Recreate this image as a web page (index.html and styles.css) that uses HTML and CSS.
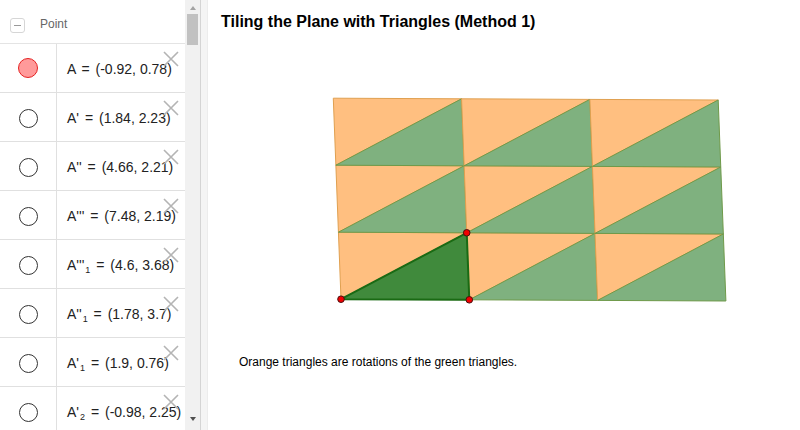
FILE: index.html
```html
<!DOCTYPE html>
<html lang="en">
<head>
    <meta charset="UTF-8">
    <title>Tiling the Plane with Triangles (Method 1)</title>
    <link rel="stylesheet" href="styles.css">
</head>
<body>
    <div class="algebra">
        <div class="list">
            <div class="list-header">
                <span class="collapse"><span class="minus"></span></span>
                <span class="group-name">Point</span>
            </div>

            <div class="item">
                <div class="marble"><span class="dot dot-on"></span></div>
                <div class="value">A <span class="eq">=</span> (-0.92, 0.78)</div>
                <svg class="delete" viewBox="0 0 16 16"><path d="M1 1 L15 15 M15 1 L1 15"/></svg>
            </div>
            <div class="item">
                <div class="marble"><span class="dot"></span></div>
                <div class="value">A' <span class="eq">=</span> (1.84, 2.23)</div>
                <svg class="delete" viewBox="0 0 16 16"><path d="M1 1 L15 15 M15 1 L1 15"/></svg>
            </div>
            <div class="item">
                <div class="marble"><span class="dot"></span></div>
                <div class="value">A'' <span class="eq">=</span> (4.66, 2.21)</div>
                <svg class="delete" viewBox="0 0 16 16"><path d="M1 1 L15 15 M15 1 L1 15"/></svg>
            </div>
            <div class="item">
                <div class="marble"><span class="dot"></span></div>
                <div class="value">A''' <span class="eq">=</span> (7.48, 2.19)</div>
                <svg class="delete" viewBox="0 0 16 16"><path d="M1 1 L15 15 M15 1 L1 15"/></svg>
            </div>
            <div class="item">
                <div class="marble"><span class="dot"></span></div>
                <div class="value">A'''<sub>1</sub> <span class="eq">=</span> (4.6, 3.68)</div>
                <svg class="delete" viewBox="0 0 16 16"><path d="M1 1 L15 15 M15 1 L1 15"/></svg>
            </div>
            <div class="item">
                <div class="marble"><span class="dot"></span></div>
                <div class="value">A''<sub>1</sub> <span class="eq">=</span> (1.78, 3.7)</div>
                <svg class="delete" viewBox="0 0 16 16"><path d="M1 1 L15 15 M15 1 L1 15"/></svg>
            </div>
            <div class="item">
                <div class="marble"><span class="dot"></span></div>
                <div class="value">A'<sub>1</sub> <span class="eq">=</span> (1.9, 0.76)</div>
                <svg class="delete" viewBox="0 0 16 16"><path d="M1 1 L15 15 M15 1 L1 15"/></svg>
            </div>
            <div class="item">
                <div class="marble"><span class="dot"></span></div>
                <div class="value">A'<sub>2</sub> <span class="eq">=</span> (-0.98, 2.25)</div>
                <svg class="delete" viewBox="0 0 16 16"><path d="M1 1 L15 15 M15 1 L1 15"/></svg>
            </div>
        </div>

        <div class="scrollbar">
            <span class="arrow-up"></span>
            <span class="thumb"></span>
            <span class="track"></span>
            <span class="arrow-down"></span>
        </div>
    </div>

    <div class="splitter"></div>

    <div class="graphics">
        <h1 class="title">Tiling the Plane with Triangles (Method 1)</h1>

        <svg class="plane" width="592" height="300" viewBox="208 45 592 300">
            <!-- bottom row -->
            <polygon class="orange" points="341,299.2 338.43,232.2 466.73,232.8"/>
            <polygon class="green" points="341,299.2 466.73,232.8 469.3,299.8"/>
            <polygon class="orange" points="469.3,299.8 466.73,232.8 595.03,233.4"/>
            <polygon class="green" points="469.3,299.8 595.03,233.4 597.6,300.4"/>
            <polygon class="orange" points="597.6,300.4 595.03,233.4 723.33,234"/>
            <polygon class="green" points="597.6,300.4 723.33,234 725.9,301"/>
            <!-- middle row -->
            <polygon class="orange" points="338.43,232.2 335.86,165.2 464.16,165.8"/>
            <polygon class="green" points="338.43,232.2 464.16,165.8 466.73,232.8"/>
            <polygon class="orange" points="466.73,232.8 464.16,165.8 592.46,166.4"/>
            <polygon class="green" points="466.73,232.8 592.46,166.4 595.03,233.4"/>
            <polygon class="orange" points="595.03,233.4 592.46,166.4 720.76,167"/>
            <polygon class="green" points="595.03,233.4 720.76,167 723.33,234"/>
            <!-- top row -->
            <polygon class="orange" points="335.86,165.2 333.29,98.2 461.59,98.8"/>
            <polygon class="green" points="335.86,165.2 461.59,98.8 464.16,165.8"/>
            <polygon class="orange" points="464.16,165.8 461.59,98.8 589.89,99.4"/>
            <polygon class="green" points="464.16,165.8 589.89,99.4 592.46,166.4"/>
            <polygon class="orange" points="592.46,166.4 589.89,99.4 718.19,100"/>
            <polygon class="green" points="592.46,166.4 718.19,100 720.76,167"/>
            <!-- the original triangle -->
            <polygon class="base" points="341,299.2 466.73,232.8 469.3,299.8"/>
            <circle class="point" cx="341" cy="299.2" r="3.3"/>
            <circle class="point" cx="469.3" cy="299.8" r="3.3"/>
            <circle class="point" cx="466.73" cy="232.8" r="3.3"/>
        </svg>

        <p class="caption">Orange triangles are rotations of the green triangles.</p>
    </div>
</body>
</html>
```

FILE: styles.css
```css
body {
    margin: 0;
    font-family: "Liberation Sans", Arial, sans-serif;
    display: flex;
    height: 430px;
    overflow: hidden;
    background: #fff;
    color: #000;
}

.algebra {
    width: 200px;
    display: flex;
    flex-shrink: 0;
}

.list {
    width: 185px;
    overflow: hidden;
}

.list-header {
    height: 43px;
    border-bottom: 1px solid #e4e4e4;
    display: flex;
    align-items: center;
    padding-left: 10px;
}

.collapse {
    width: 13px;
    height: 13px;
    border: 1px solid #d6d6d6;
    border-radius: 3px;
    display: flex;
    align-items: center;
    justify-content: center;
    margin-top: 7px;
}

.minus {
    width: 7px;
    height: 1px;
    background: #9a9a9a;
}

.group-name {
    font-size: 12px;
    color: #666;
    margin-left: 15px;
    margin-top: 4px;
}

.item {
    position: relative;
    height: 48px;
    border-bottom: 1px solid #e0e0e0;
    display: flex;
}

.marble {
    width: 56px;
    border-right: 1px solid #e0e0e0;
    display: flex;
    align-items: center;
    justify-content: center;
}

.dot {
    width: 17px;
    height: 17px;
    border: 1.5px solid #333;
    border-radius: 50%;
    background: #fff;
    margin-top: 2px;
}

.dot-on {
    background: #ff9a9a;
    border-color: #e52222;
    border-width: 1px;
    width: 18px;
    height: 18px;
    margin-top: 0;
}

.value {
    font-size: 14px;
    line-height: 50px;
    color: #222;
    padding-left: 10px;
    white-space: nowrap;
}

.eq {
    margin: 0 2px;
}

.value sub {
    font-size: 9px;
    margin-left: 1px;
    line-height: 0;
    vertical-align: -3px;
}

.delete {
    position: absolute;
    left: 163px;
    top: 7px;
    width: 16px;
    height: 16px;
    fill: none;
    stroke: #b4b4b4;
    stroke-width: 1.6;
}

.scrollbar {
    width: 15px;
    background: #f1f1f1;
    display: flex;
    flex-direction: column;
    align-items: center;
}

.arrow-up {
    margin-top: 6px;
    width: 0;
    height: 0;
    border-left: 3.5px solid transparent;
    border-right: 3.5px solid transparent;
    border-bottom: 4px solid #a3a3a3;
}

.thumb {
    margin-top: 4px;
    width: 11px;
    height: 31px;
    background: #c1c1c1;
}

.track {
    flex: 1;
}

.arrow-down {
    margin-bottom: 9px;
    width: 0;
    height: 0;
    border-left: 3.5px solid transparent;
    border-right: 3.5px solid transparent;
    border-top: 4px solid #505050;
}

.splitter {
    width: 6px;
    flex-shrink: 0;
    background: #f4f4f4;
    border-left: 1px solid #d4d4d4;
    border-right: 1px solid #ececec;
}

.graphics {
    flex: 1;
    display: flex;
    flex-direction: column;
}

.title {
    margin: 0;
    padding: 12px 0 0 13px;
    height: 20px;
    line-height: 20px;
    margin-bottom: 13px;
    font-size: 16px;
    font-weight: bold;
    white-space: nowrap;
}

.plane {
    display: block;
}

.orange {
    fill: #ffbf80;
    stroke: #e0a050;
    stroke-width: 1;
}

.green {
    fill: #7fb17f;
    stroke: #6f9a4a;
    stroke-width: 1;
}

.base {
    fill: #408a3c;
    stroke: #1a6a14;
    stroke-width: 2;
}

.point {
    fill: #f20000;
    stroke: #4a1010;
    stroke-width: 1;
}

.caption {
    margin: 10px 0 0 31px;
    font-size: 12px;
    line-height: 14px;
}
```
